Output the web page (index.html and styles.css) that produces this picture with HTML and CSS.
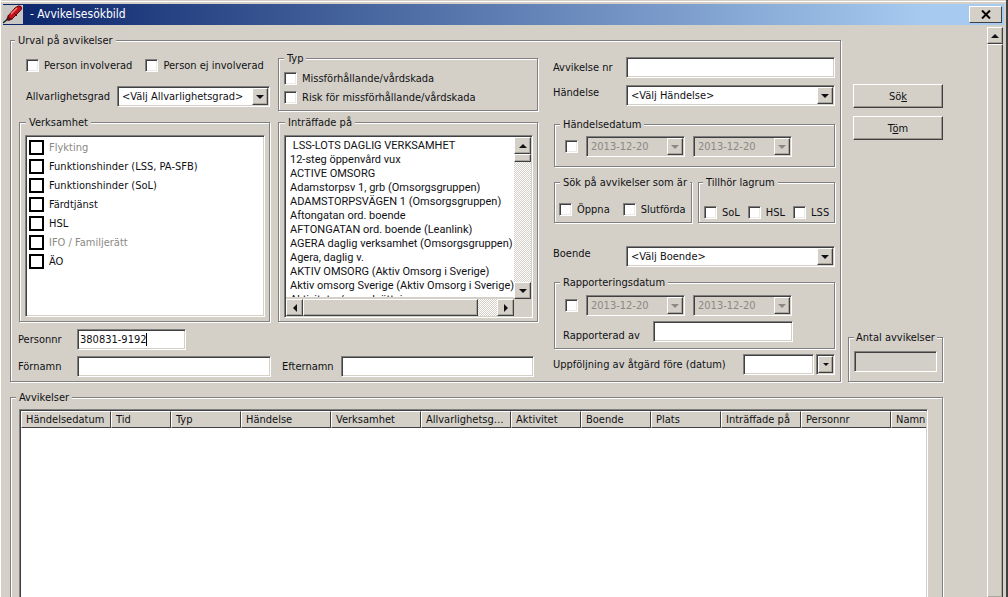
FILE: index.html
```html
<!DOCTYPE html>
<html lang="sv">
<head>
<meta charset="utf-8">
<title>Avvikelsesökbild</title>
<link rel="stylesheet" href="styles.css">
</head>
<body>
<div class="window">
  <header class="titlebar">
    <svg class="app-icon" viewBox="0 0 20 19" aria-hidden="true">
      <rect width="20" height="19" fill="#c9c7c4"/>
      <path d="M3 15 L5 10 L10 14 L6 16 Z" fill="#6b1210"/>
      <path d="M0 18 L5 14" stroke="#222" stroke-width="1.5"/>
      <path d="M5 11 L12 3 Q16 -0.5 18 1.500 Q20 4 16 7 L9 14 Q6 14 5 11Z" fill="#c8131c" stroke="#5c0a0c"/>
      <path d="M8 9 L14 3" stroke="#ff7c7c" stroke-width="1.5"/>
      <path d="M11 8 L14 11" stroke="#5c0a0c"/>
    </svg>
    <h1 class="title">- Avvikelsesökbild</h1>
    <button class="close" type="button" aria-label="Stäng"><svg viewBox="0 0 10 9" width="10" height="9"><path d="M1 0.5 L9 8.5 M9 0.5 L1 8.5" stroke="#000" stroke-width="2"/></svg></button>
  </header>
  <div class="body">
    <main class="content">
      <div class="top">
        <fieldset class="group criteria">
          <legend>Urval på avvikelser</legend>
          <div class="criteria-grid">
            <div class="left">
              <div class="pair">
                <div class="person">
                  <div class="checks">
                    <label class="check"><input type="checkbox">Person involverad</label>
                    <label class="check"><input type="checkbox">Person ej involverad</label>
                  </div>
                  <div class="severity">
                    <label class="wide" for="grad">Allvarlighetsgrad</label>
                    <span class="combo"><select id="grad"><option>&lt;Välj Allvarlighetsgrad&gt;</option></select><span class="arrow down"></span></span>
                  </div>
                </div>
                <fieldset class="group type">
                  <legend>Typ</legend>
                  <label class="check"><input type="checkbox">Missförhållande/vårdskada</label>
                  <label class="check"><input type="checkbox">Risk för missförhållande/vårdskada</label>
                </fieldset>
              </div>
              <div class="pair">
                <fieldset class="group lists">
                  <legend>Verksamhet</legend>
                  <div class="sunken units">
                    <label class="unit off"><input type="checkbox" disabled>Flykting</label>
                    <label class="unit"><input type="checkbox">Funktionshinder (LSS, PA-SFB)</label>
                    <label class="unit"><input type="checkbox">Funktionshinder (SoL)</label>
                    <label class="unit"><input type="checkbox">Färdtjänst</label>
                    <label class="unit"><input type="checkbox">HSL</label>
                    <label class="unit off"><input type="checkbox" disabled>IFO / Familjerätt</label>
                    <label class="unit"><input type="checkbox">ÄO</label>
                  </div>
                </fieldset>
                <fieldset class="group lists">
                  <legend>Inträffade på</legend>
                  <div class="sunken places">
                    <ul class="place-list" role="listbox" aria-label="Inträffade på">
                      <li role="option">&nbsp;LSS-LOTS DAGLIG VERKSAMHET</li>
                      <li role="option">12-steg öppenvård vux</li>
                      <li role="option">ACTIVE OMSORG</li>
                      <li role="option">Adamstorpsv 1, grb (Omsorgsgruppen)</li>
                      <li role="option">ADAMSTORPSVÄGEN 1 (Omsorgsgruppen)</li>
                      <li role="option">Aftongatan ord. boende</li>
                      <li role="option">AFTONGATAN ord. boende (Leanlink)</li>
                      <li role="option">AGERA daglig verksamhet (Omsorgsgruppen)</li>
                      <li role="option">Agera, daglig v.</li>
                      <li role="option">AKTIV OMSORG (Aktiv Omsorg i Sverige)</li>
                      <li role="option">Aktiv omsorg Sverige (Aktiv Omsorg i Sverige)</li>
                      <li role="option">Aktiviteter/sysselsättning vux</li>
                    </ul>
                    <div class="scroll-v">
                      <button class="arrow up" type="button" aria-label="Upp"></button>
                      <span class="thumb"></span>
                      <button class="arrow down" type="button" aria-label="Ned"></button>
                    </div>
                    <div class="scroll-h">
                      <button class="arrow prev" type="button" aria-label="Vänster"></button>
                      <span class="thumb"></span>
                      <button class="arrow next" type="button" aria-label="Höger"></button>
                    </div>
                  </div>
                </fieldset>
              </div>
              <div class="names">
                <label class="wide first" for="pnr">Personnr</label>
                <span class="pnr-box"><input class="field" id="pnr" type="text" value="380831-9192"><span class="caret"></span></span>
                <label class="wide first" for="fn">Förnamn</label>
                <input class="field" id="fn" type="text">
                <label class="wide last" for="en">Efternamn</label>
                <input class="field" id="en" type="text">
              </div>
            </div>
            <div class="right">
              <div class="line">
                <label class="wide" for="nr">Avvikelse nr</label>
                <input class="field" id="nr" type="text">
              </div>
              <div class="line event">
                <label class="wide" for="event">Händelse</label>
                <span class="combo"><select id="event"><option>&lt;Välj Händelse&gt;</option></select><span class="arrow down"></span></span>
              </div>
              <fieldset class="group dates event-dates">
                <legend>Händelsedatum</legend>
                <div class="date-row">
                  <input class="box" type="checkbox" aria-label="Händelsedatum">
                  <span class="combo off"><select disabled aria-label="Från"><option>2013-12-20</option></select><span class="arrow down"></span></span>
                  <span class="combo off"><select disabled aria-label="Till"><option>2013-12-20</option></select><span class="arrow down"></span></span>
                </div>
              </fieldset>
              <div class="states">
                <fieldset class="group status">
                  <legend>Sök på avvikelser som är</legend>
                  <label class="check"><input type="checkbox">Öppna</label>
                  <label class="check"><input type="checkbox">Slutförda</label>
                </fieldset>
                <fieldset class="group law">
                  <legend>Tillhör lagrum</legend>
                  <label class="check"><input type="checkbox">SoL</label>
                  <label class="check"><input type="checkbox">HSL</label>
                  <label class="check"><input type="checkbox">LSS</label>
                </fieldset>
              </div>
              <div class="line home">
                <label class="wide" for="home">Boende</label>
                <span class="combo"><select id="home"><option>&lt;Välj Boende&gt;</option></select><span class="arrow down"></span></span>
              </div>
              <fieldset class="group dates report-dates">
                <legend>Rapporteringsdatum</legend>
                <div class="date-row">
                  <input class="box" type="checkbox" aria-label="Rapporteringsdatum">
                  <span class="combo off"><select disabled aria-label="Från"><option>2013-12-20</option></select><span class="arrow down"></span></span>
                  <span class="combo off"><select disabled aria-label="Till"><option>2013-12-20</option></select><span class="arrow down"></span></span>
                </div>
                <div class="reporter">
                  <label class="wide" for="rep">Rapporterad av</label>
                  <input class="field" id="rep" type="text">
                </div>
              </fieldset>
              <div class="follow">
                <label class="wide" for="follow">Uppföljning av åtgärd före (datum)</label>
                <input class="field" id="follow" type="text">
                <span class="combo pick"><button class="arrow down" type="button" aria-label="Välj datum"></button></span>
              </div>
            </div>
          </div>
        </fieldset>
        <aside class="side">
          <button class="push" type="button">Sö<u>k</u></button>
          <button class="push" type="button">T<u>ö</u>m</button>
          <fieldset class="group total">
            <legend>Antal avvikelser</legend>
            <input class="field readonly" type="text" readonly aria-label="Antal avvikelser">
          </fieldset>
        </aside>
      </div>
      <fieldset class="group results">
        <legend>Avvikelser</legend>
        <div class="sunken grid-box">
          <table class="grid">
            <colgroup>
              <col class="w90"><col class="w60"><col class="w70"><col class="w90"><col class="w90"><col class="w90"><col class="w70"><col class="w70"><col class="w70"><col class="w80"><col class="w90"><col>
            </colgroup>
            <thead>
              <tr><th>Händelsedatum</th><th>Tid</th><th>Typ</th><th>Händelse</th><th>Verksamhet</th><th>Allvarlighetsgrad</th><th>Aktivitet</th><th>Boende</th><th>Plats</th><th>Inträffade på</th><th>Personnr</th><th>Namn</th></tr>
            </thead>
            <tbody></tbody>
          </table>
        </div>
      </fieldset>
    </main>
    <div class="page-scroll">
      <button class="arrow up" type="button" aria-label="Upp"></button>
      <span class="thumb"></span>
    </div>
  </div>
</div>
</body>
</html>
```
FILE: styles.css
```css
* { box-sizing: border-box; }

:root {
  --face: #d4d0c8;
  --dark: #404040;
  --shade: #808080;
  --ink: #101014;
}

body {
  margin: 0;
  height: 100vh;
  overflow: hidden;
  background: var(--face);
  color: var(--ink);
  font: 11px/13px "DejaVu Sans Condensed", "Noto Sans", sans-serif;
}

button, input, select {
  margin: 0;
  padding: 0;
  color: inherit;
  font: inherit;
  border-radius: 0;
  appearance: none;
}

.window {
  display: flex;
  flex-direction: column;
  height: 100vh;
  padding: 4px 2px 0;
  border-left: 1px solid #fff;
  border-right: 2px solid var(--dark);
  background: linear-gradient(#d4d0c8 1px, #fff 1px, #fff 2px, #d4d0c8 2px);
}

/* Title bar */
.titlebar {
  display: flex;
  align-items: center;
  flex: none;
  height: 21px;
  padding-right: 2px;
  background: linear-gradient(90deg, #0a246a, #a6caf0 92%);
}
.app-icon { width: 20px; height: 19px; }
.title {
  flex: 1;
  margin: 0 0 0 7px;
  color: #fff;
  font-size: 12px;
  font-weight: normal;
}
.close {
  display: flex;
  align-items: center;
  justify-content: center;
  width: 33px;
  height: 17px;
  background: var(--face);
  border: 1px solid;
  border-color: #fff var(--dark) var(--dark) #fff;
}

.body { display: flex; flex: 1; min-height: 0; }
.content {
  display: flex;
  flex-direction: column;
  flex: 1;
  min-width: 0;
  padding: 9px 44px 0 7px;
}
.top { display: flex; gap: 7px; }

/* Etched frames */
.group {
  min-width: 0;
  margin: 0;
  padding: 0;
  border: 1px solid var(--shade);
  box-shadow: 1px 1px 0 #fff, inset 1px 1px 0 #fff;
}
.group > legend {
  margin-left: 5px;
  padding: 0 3px;
  white-space: nowrap;
  background: var(--face);
}

.criteria { flex: 1; height: 348px; }
.criteria > legend { margin-left: 4px; }
.criteria-grid {
  display: grid;
  grid-template-columns: 519fr 282fr;
  gap: 15px;
  padding: 5px 5px 0 8px;
}
.pair {
  display: grid;
  grid-template-columns: 251fr 260fr;
  gap: 8px;
}

/* Fields */
.field, .sunken, .combo {
  background: #fff;
  border: 1px solid;
  border-color: var(--shade) #fff #fff var(--shade);
  box-shadow: inset 1px 1px 0 var(--dark), inset -1px -1px 0 var(--face);
}
.field { width: 100%; min-width: 0; height: 21px; padding-left: 2px; }
.readonly { background: #d2cec8; }
.combo { display: flex; min-width: 0; height: 21px; padding: 1px; }
.combo select {
  flex: 1;
  min-width: 0;
  padding-left: 3px;
  border: 0;
  background: transparent;
}
.off, .combo.off { background: transparent; color: #8b8984; }
.off select { opacity: 1; }

.arrow, .thumb {
  background: var(--face);
  border: 1px solid;
  border-color: #fff var(--dark) var(--dark) #fff;
  box-shadow: inset -1px -1px 0 #aaa79f;
}
.arrow {
  display: flex;
  align-items: center;
  justify-content: center;
  flex: none;
  width: 16px;
  height: 17px;
}
.arrow::before { content: ""; border: 4px solid transparent; }
.down::before { border-top-color: currentColor; border-bottom: 0; }
.up::before { border-bottom-color: currentColor; border-top: 0; }
.prev::before { border-right-color: currentColor; border-left: 0; }
.next::before { border-left-color: currentColor; border-right: 0; }

.check, .wide { white-space: nowrap; }
.check { display: flex; align-items: center; gap: 5px; }
.check input, .box {
  flex: none;
  width: 13px;
  height: 13px;
  background: #fff;
  border: 1px solid;
  border-color: var(--shade) #fff #fff var(--shade);
  box-shadow: inset 1px 1px 0 var(--dark), inset -1px -1px 0 #eceae5;
}

/* Severity and type */
.person { padding: 5px 0 0 7px; }
.checks { display: flex; gap: 13px; height: 17px; }
.severity {
  display: grid;
  grid-template-columns: 86px 1fr;
  align-items: center;
  gap: 5px;
  margin-top: 12px;
}
.type { height: 59px; }
.type legend + .check { margin-top: 4px; }
.type .check { height: 19px; padding-left: 5px; }

/* List frames */
.lists { height: 206px; margin-top: 5px; padding: 0 4px 4px 5px; }
.lists > legend { margin-left: 1px; }
.units { height: 182px; padding: 2px 0 0 3px; margin-top: 6px; }
.unit { display: flex; align-items: center; gap: 5px; height: 19px; }
.unit input {
  flex: none;
  width: 15px;
  height: 15px;
  background: #fff;
  border: 2px solid #000;
}
.places {
  display: grid;
  grid-template-columns: 1fr 17px;
  grid-template-rows: 1fr 17px;
  height: 183px;
  margin-top: 6px;
  padding: 1px;
  background: var(--face);
}
.place-list {
  min-width: 0;
  height: 160px;
  margin: 0;
  padding: 2px 0 0 4px;
  overflow: hidden;
  list-style: none;
  font-family: Roboto, sans-serif;
  line-height: 14px;
  white-space: nowrap;
  background: #fff;
}
.scroll-v, .scroll-h {
  display: flex;
  background: repeating-conic-gradient(#fff 0 25%, #d4d0c8 0 50%) 0 0 / 2px 2px;
}
.scroll-v { flex-direction: column; }
.scroll-v .arrow, .scroll-h .arrow { width: 17px; height: 17px; }
.scroll-v .thumb { height: 8px; }
.scroll-v .down { margin-top: auto; }
.scroll-h .thumb { width: 175px; }
.scroll-h .next { margin-left: auto; }

/* Name fields */
.names {
  display: grid;
  grid-template-columns: 58fr 194fr 70fr 193fr;
  row-gap: 6px;
  align-items: center;
  padding: 7px 4px 0 0;
}
.names .first { grid-column: 1; margin-left: -1px; }
.names .last { padding-left: 11px; }
.pnr-box { display: flex; position: relative; width: 109px; }
.caret { position: absolute; top: 4px; left: 69px; width: 1px; height: 13px; background: #000; }

/* Right column */
.right { display: flex; flex-direction: column; padding-top: 5px; }
.line {
  display: grid;
  grid-template-columns: 73px 1fr;
  align-items: center;
}
.event, .home { align-items: start; }
.event .wide, .home .wide { padding-top: 1px; }
.event { margin-top: 7px; }
.dates { margin: 12px 0 0 1px; }
.event-dates { height: 49px; }
.date-row {
  display: grid;
  grid-template-columns: 13px 99px 99px;
  align-items: center;
  gap: 8px;
  padding-left: 10px;
}
.event-dates .date-row { margin-top: 5px; }
.states {
  display: grid;
  grid-template-columns: 138fr 137fr;
  gap: 6px;
  margin: 9px 0 0 1px;
}
.states .group { display: flex; align-items: center; height: 47px; }
.status { gap: 13px; padding: 7px 0 0 4px; }
.law { gap: 8px; padding: 14px 0 0 5px; }
.status > legend { margin-left: 1px; }
.law > legend { margin-left: -1px; }
.home { margin-top: 23px; }
.report-dates { height: 73px; margin-top: 9px; }
.report-dates .date-row { padding-top: 6px; }
.reporter {
  display: grid;
  grid-template-columns: 90px 140px;
  align-items: end;
  margin-top: 5px;
  padding-left: 8px;
}
.follow {
  display: grid;
  grid-template-columns: 1fr 71px 19px;
  align-items: center;
  gap: 2px;
  margin-top: 5px;
}
.pick { background: var(--face); }
.pick .arrow { width: 15px; }
.pick .arrow::before { border-width: 3px 3px 0; }

/* Side column */
.side {
  display: flex;
  flex-direction: column;
  gap: 8px;
  width: 95px;
  padding-top: 50px;
}
.push {
  height: 24px;
  margin-left: 5px;
  background: var(--face);
  border: 1px solid;
  border-color: #fff var(--dark) var(--dark) #fff;
  box-shadow: inset -1px -1px 0 #9a978f;
}
.total { height: 51px; margin-top: auto; padding: 7px 5px 0; }
.total > legend { margin-left: 0; padding: 0 2px; }

/* Result grid */
.results {
  display: flex;
  flex: 1;
  margin-top: 9px;
  margin-bottom: -2px;
  padding: 0 14px 0 8px;
}
.results > legend { margin-left: -3px; }
.grid-box { width: 100%; height: 100%; min-height: 180px; margin-top: 5px; padding: 1px; overflow: hidden; }
.grid { width: 100%; table-layout: fixed; border-collapse: separate; border-spacing: 0; }
.w60 { width: 60px; }
.w70 { width: 70px; }
.w80 { width: 80px; }
.w90 { width: 90px; }
.grid th {
  height: 17px;
  padding: 0 4px;
  overflow: hidden;
  text-align: left;
  text-overflow: ellipsis;
  white-space: nowrap;
  font-weight: normal;
  background: var(--face);
  border: 1px solid;
  border-color: #fff var(--dark) var(--dark) #fff;
}
.grid th:last-child { padding-right: 0; border-right: 0; text-overflow: clip; }

/* Page scrollbar */
.page-scroll {
  display: flex;
  flex-direction: column;
  width: 16px;
  margin-right: 1px;
  padding-top: 2px;
}
.page-scroll .thumb { flex: 1; border-bottom: 0; }
```
